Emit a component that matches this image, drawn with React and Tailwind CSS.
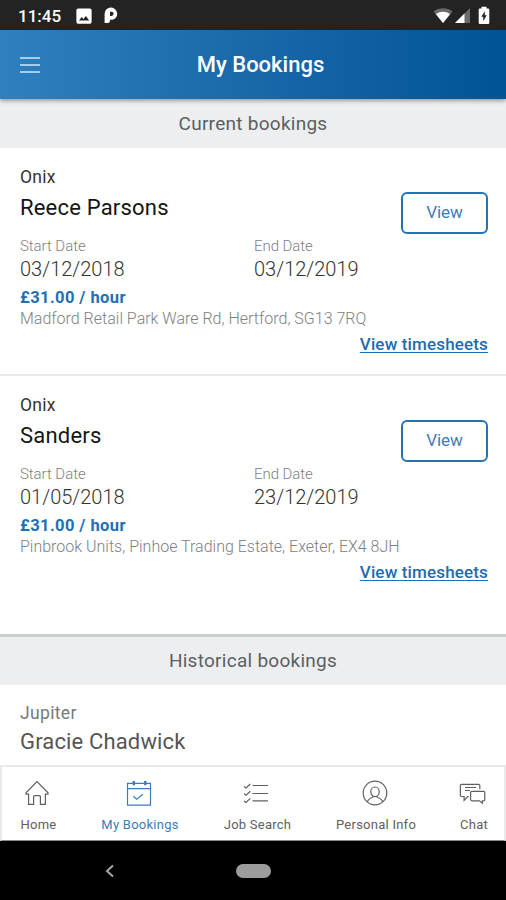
import React from "react";

const bookings = [
    {
        company: "Onix",
        name: "Reece Parsons",
        start: "03/12/2018",
        end: "03/12/2019",
        rate: "£31.00 / hour",
        address: "Madford Retail Park Ware Rd, Hertford, SG13 7RQ",
    },
    {
        company: "Onix",
        name: "Sanders",
        start: "01/05/2018",
        end: "23/12/2019",
        rate: "£31.00 / hour",
        address: "Pinbrook Units, Pinhoe Trading Estate, Exeter, EX4 8JH",
    },
];

function StatusBar() {
    return (
        <div className="h-[30px] bg-[#232323] flex items-center justify-between pl-[18px] pr-[16px] text-white">
            <div className="flex items-center">
                <span className="w-[44px] text-[17px] font-medium leading-[30px] pt-[2px]">11:45</span>
                <svg className="ml-[14px] mt-[1px]" width="16" height="16" viewBox="0 0 16 16">
                    <path fillRule="evenodd" fill="#fff" d="M2 0.5h12a1.6 1.6 0 0 1 1.6 1.6v12a1.6 1.6 0 0 1-1.6 1.6H2a1.6 1.6 0 0 1-1.6-1.6v-12A1.6 1.6 0 0 1 2 .5zM3 12.5h10.2L9.9 8l-2.4 3.1-1.8-2z" />
                </svg>
                <svg className="ml-[12px]" width="14" height="17" viewBox="0 0 14 17">
                    <path fillRule="evenodd" fill="#fff" d="M7 0.600a6.200 6.200 0 0 1 6.200 6.100c0 3.500-2.500 6-5.800 6H6v1.100A2.300 2.300 0 0 1 3.700 16H.6V6.800A6.200 6.200 0 0 1 7 .6zM6 4.700v4.200h1.500a2.100 2.100 0 0 0 0-4.200z" />
                </svg>
            </div>
            <div className="flex items-center">
                <svg width="20" height="17" viewBox="0 0 20 17">
                    <path fill="#6a6a6a" d="M0.500 4.500C6 .1 14 .1 19.500 4.500L10 16z" />
                    <path fill="#fff" d="M2.800 7.100C7 3.800 13 3.800 17.200 7.100L10 16z" />
                </svg>
                <svg className="ml-[1px]" width="17" height="17" viewBox="0 0 17 17">
                    <path fill="#6a6a6a" d="M16 1v15H1z" />
                    <path fill="#fff" d="M10.500 6.500V16H1z" />
                </svg>
                <svg className="ml-[7px]" width="12" height="19" viewBox="0 0 12 19">
                    <path fill="#fff" d="M3.500 0.800h5v1.800h1.600a1.200 1.200 0 0 1 1.200 1.200v13a1.200 1.200 0 0 1-1.200 1.200H1.900a1.200 1.200 0 0 1-1.200-1.200v-13a1.200 1.200 0 0 1 1.200-1.200h1.600z" />
                    <path fill="#232323" d="M6.800 5.200v4h1.900l-3.500 6v-4.400H3.300z" />
                </svg>
            </div>
        </div>
    );
}

function Header() {
    return (
        <div className="relative h-[69px] bg-linear-to-r from-[#2e80bf] via-[#1868aa] to-[#005496] flex items-center shadow-[0_2px_4px_rgba(0,0,0,0.35)]">
            <div className="ml-5 w-[20px] h-[16px] flex flex-col justify-between">
                <div className="h-[2px] bg-[#a9cbe6]" />
                <div className="h-[2px] bg-[#a9cbe6]" />
                <div className="h-[2px] bg-[#a9cbe6]" />
            </div>
            <h1 className="flex-1 pr-[25px] pb-px text-center text-[22px] font-medium text-white">My Bookings</h1>
        </div>
    );
}

function SectionTitle({ children }) {
    return (
        <h2 className="h-full bg-[#eceef0] flex items-center justify-center text-[19px] tracking-[0.27px] text-[#5c5f62]">
            {children}
        </h2>
    );
}

function DateField({ label, value }) {
    return (
        <div className="w-[234px]">
            <div className="text-[15px] leading-5 font-light tracking-[-0.05px] text-[#808080]">{label}</div>
            <div className="mt-px text-[20px] leading-6 font-light text-[#333]">{value}</div>
        </div>
    );
}

function BookingCard({ booking }) {
    return (
        <div className="pl-5 pr-[18px] pt-[18px]">
            <div className="h-[70px] flex justify-between items-start">
                <div>
                    <div className="text-[17.5px] leading-[22px] tracking-[0.3px] text-[#333]">{booking.company}</div>
                    <div className="mt-[6px] text-[22px] leading-[28px] tracking-[0.2px] text-[#151515]">{booking.name}</div>
                </div>
                <button className="mt-[26px] w-[87px] h-[42px] rounded-[6px] border-2 border-[#2474b5] text-[17px] text-[#3d7cb8]">
                    View
                </button>
            </div>
            <div className="flex">
                <DateField label="Start Date" value={booking.start} />
                <DateField label="End Date" value={booking.end} />
            </div>
            <div className="mt-[7px] text-[16.5px] leading-5 font-bold tracking-[0.4px] text-[#1f70b4]">{booking.rate}</div>
            <div className="mt-px text-[16px] leading-5 font-light text-[#808080] whitespace-nowrap">
                {booking.address}
            </div>
            <div className="mt-[5px] h-5 text-right text-[17px] leading-5 tracking-[0.15px] text-[#1f6cb0]">
                <a className="underline underline-offset-2 decoration-1 font-medium">View timesheets</a>
            </div>
        </div>
    );
}

function HomeIcon() {
    return (
        <svg width="26" height="26" viewBox="0 0 26 26" fill="none" stroke="currentColor" strokeWidth="1.200">
            <path d="M2 14.200V12.800L13 1.600 24 12.800v1.400h-2.600V24.400h-5V16.600a1 1 0 0 0-1-1h-4.800a1 1 0 0 0-1 1v7.800h-5V14.200z" />
        </svg>
    );
}

function CalendarIcon() {
    return (
        <svg width="26" height="26" viewBox="0 0 26 26" fill="none" stroke="currentColor" strokeWidth="1.200">
            <path d="M1.500 3.300h23v21.900h-23zM1.500 8.700h23M7.300 16.200l3.400 3 6.300-5" />
            <path strokeWidth="2.400" d="M7.800 1v4.200M19.300 1v4.200" />
        </svg>
    );
}

function ListIcon() {
    return (
        <svg width="26" height="26" viewBox="0 0 26 26" fill="none" stroke="currentColor" strokeWidth="1.200">
            <path d="M9.500 5.500H25M9.500 13.500H25M9.500 20.800H25" />
            <path d="M1 6.500l2 1.500 4.300-4M1 13.700l2 1.500 4.300-4M1 20.900l2 1.500 4.300-4" />
        </svg>
    );
}

function PersonIcon() {
    return (
        <svg width="26" height="26" viewBox="0 0 26 26" fill="none" stroke="currentColor" strokeWidth="1.200">
            <circle cx="13" cy="13" r="11.800" />
            <ellipse cx="13" cy="11.800" rx="4.200" ry="4.800" />
            <path d="M5.500 22c.4-2.700 2-3.700 5.300-4.800v-1M20.500 22c-.4-2.700-2-3.700-5.300-4.800v-1" />
        </svg>
    );
}

function ChatIcon() {
    return (
        <svg width="28" height="26" viewBox="0 0 28 26" fill="none" stroke="currentColor" strokeWidth="1.200">
            <path d="M9.800 16.500H8.700l-3.600 4v-4H2.600a1.200 1.200 0 0 1-1.200-1.200V5.500a1.200 1.200 0 0 1 1.200-1.200h17a1.200 1.200 0 0 1 1.200 1.200v3.700M6 7.500h11M6 10.500h5" />
            <path d="M12.800 11.400h11.800a1.200 1.200 0 0 1 1.200 1.200v7a1.200 1.200 0 0 1-1.200 1.200h-1.200v2.400l-3-2.400h-7.600a1.200 1.200 0 0 1-1.200-1.200v-7a1.200 1.200 0 0 1 1.200-1.200z" />
        </svg>
    );
}

const tabs = [
    { label: "Home", Icon: HomeIcon, width: "w-[37px]", iconClass: "pr-[3px]" },
    { label: "My Bookings", Icon: CalendarIcon, width: "w-[78px]", iconClass: "pr-[2px]", active: true },
    { label: "Job Search", Icon: ListIcon, width: "w-[69px]", iconClass: "pr-[3px]" },
    { label: "Personal Info", Icon: PersonIcon, width: "w-[80px]", iconClass: "pr-[3px]" },
    { label: "Chat", Icon: ChatIcon, width: "w-[28px]", iconClass: "pr-[2px]" },
];

function TabBar() {
    return (
        <nav className="h-[76px] shrink-0 bg-white border-2 border-b border-[#e9eaeb] border-b-[#8a8a8a] flex justify-between pl-[18px] pr-[16px]">
            {tabs.map(({ label, Icon, width, iconClass, active }) => (
                <div
                    key={label}
                    className={`${width} pt-[13px] flex flex-col items-center ${active ? "text-[#3d7cb8]" : "text-[#606060]"}`}
                >
                    <div className={iconClass}>
                        <Icon />
                    </div>
                    <span className="mt-[11px] text-[13px] leading-4 tracking-[0.25px] whitespace-nowrap">{label}</span>
                </div>
            ))}
        </nav>
    );
}

export default function App() {
    return (
        <div className="w-[506px] h-[900px] overflow-hidden bg-white flex flex-col font-['Roboto',sans-serif]">
            <StatusBar />
            <Header />
            <div className="h-[49px] pt-px bg-[#eceef0]">
                <SectionTitle>Current bookings</SectionTitle>
            </div>
            <div className="h-[228px] border-b-2 border-[#e9eaeb]">
                <BookingCard booking={bookings[0]} />
            </div>
            <div className="h-[258px]">
                <BookingCard booking={bookings[1]} />
            </div>
            <div className="h-[51px] border-t-3 border-[#cbcfd1]">
                <SectionTitle>Historical bookings</SectionTitle>
            </div>
            <div className="h-[80px] pl-5 pt-[17px]">
                <div className="text-[17.5px] leading-[22px] tracking-[0.35px] text-[#77797b]">Jupiter</div>
                <div className="mt-[4px] text-[22px] leading-[28px] tracking-[0.15px] text-[#555]">Gracie Chadwick</div>
            </div>
            <TabBar />
            <div className="h-[59px] bg-black flex items-center">
                <svg className="ml-[105px]" width="10" height="14" viewBox="0 0 10 14" fill="none" stroke="#a8a8a8" strokeWidth="2">
                    <path d="M8 1.500L2 7l6 5.500" />
                </svg>
                <div className="ml-[121px] w-[35px] h-[14px] rounded-full bg-[#9c9c9c]" />
            </div>
        </div>
    );
}
